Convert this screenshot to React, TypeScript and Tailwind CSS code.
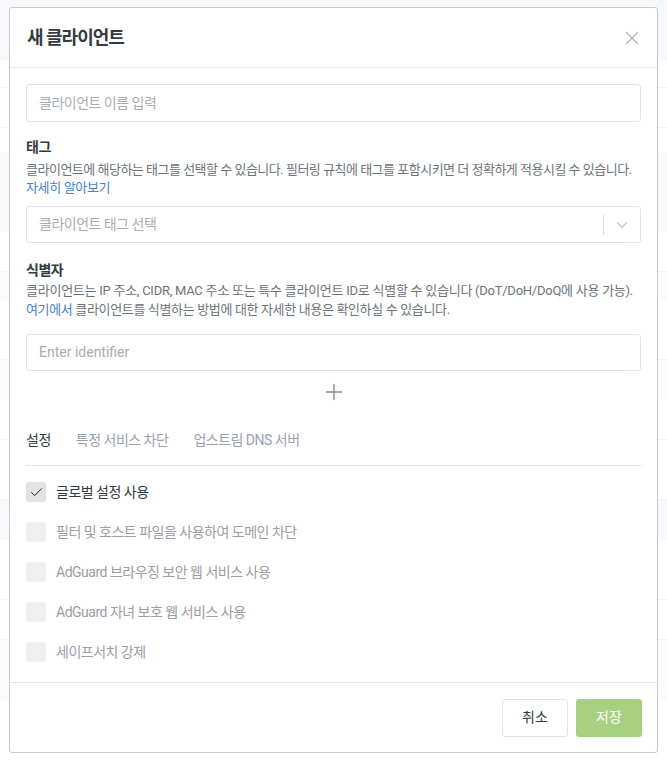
import { X, Plus, ChevronDown, Check } from "lucide-react";

const font = "font-['Roboto','Noto_Sans_CJK_KR',sans-serif]";

// Faint page rows behind the backdrop
const bgRows = [
  { h: "h-[60px]", cls: "bg-[#f3f6fa]" },
  { h: "h-[28px]", cls: "border-b border-[#eef0f3]" },
  { h: "h-[40px]", cls: "border-b border-[#eef0f3]" },
  { h: "h-[24px]", cls: "" },
  { h: "h-[80px]", cls: "bg-[#f7f7f8]" },
  { h: "h-[40px]", cls: "border-b border-[#eef0f3]" },
  { h: "h-[28px]", cls: "bg-[#f8f9fa]" },
  { h: "h-[60px]", cls: "border-b border-[#eef0f3]" },
  { h: "h-[40px]", cls: "bg-[#f8f9fb]" },
  { h: "h-[40px]", cls: "border-b border-[#eef0f3]" },
  { h: "h-[60px]", cls: "border-b border-[#eef0f3]" },
  { h: "h-[40px]", cls: "bg-[#f5f7fb]" },
  { h: "h-[60px]", cls: "border-b border-[#eef0f3]" },
  { h: "h-[40px]", cls: "border-b border-[#eef0f3]" },
  { h: "h-[60px]", cls: "bg-[#f8f9fa]" },
];

const settings = [
  { label: "글로벌 설정 사용", checked: true },
  { label: "필터 및 호스트 파일을 사용하여 도메인 차단", checked: false },
  { label: "AdGuard 브라우징 보안 웹 서비스 사용", checked: false },
  { label: "AdGuard 자녀 보호 웹 서비스 사용", checked: false },
  { label: "세이프서치 강제", checked: false },
];

const tabs = ["설정", "특정 서비스 차단", "업스트림 DNS 서버"];

const App = () => {
  return (
    <div className={`relative w-full h-[762px] overflow-hidden bg-white ${font}`}>
      {/* Page behind the modal */}
      <div className="flex flex-col opacity-70">
        {bgRows.map((row, i) => (
          <div key={i} className={`${row.h} ${row.cls}`} />
        ))}
      </div>

      {/* Modal */}
      <div className="absolute left-[9px] top-[7px] w-[649px] h-[746px] flex flex-col bg-white border border-[#c9c9c9] rounded-[3px]">
        {/* Header */}
        <div className="h-[60px] shrink-0 flex items-center justify-between pl-[17px] pr-[14px] border-b border-[#e6e8ec]">
          <h2 className="text-[18px] font-semibold tracking-[-1px] text-[#343a40]">새 클라이언트</h2>
          <button className="text-[#b0b4ba]">
            <X size={22} strokeWidth={1.3} />
          </button>
        </div>

        {/* Body */}
        <div className="flex-1 flex flex-col px-[16px] pt-[16px]">
          <div className="h-[38px] flex items-center px-[12px] border border-[#e0e5ec] rounded-[3px] text-[14px] tracking-[-0.5px] text-[#a8adb4]">
            클라이언트 이름 입력
          </div>

          <div className="mt-[15px] h-[21px] leading-[21px] text-[14px] font-semibold tracking-[-0.5px] text-[#343a40]">태그</div>
          <p className="mt-[3px] text-[13px] leading-[18px] tracking-[-0.5px] whitespace-nowrap text-[#6e737a]">
            클라이언트에 해당하는 태그를 선택할 수 있습니다. 필터링 규칙에 태그를 포함시키면 더 정확하게 적용시킬 수 있습니다.
          </p>
          <a className="text-[13px] leading-[18px] tracking-[-0.35px] text-[#467fcf] w-fit">자세히 알아보기</a>

          <div className="mt-[9px] h-[37px] flex items-center border border-[#e0e5ec] rounded-[3px]">
            <span className="flex-1 px-[12px] text-[14px] tracking-[-0.5px] text-[#a8adb4]">클라이언트 태그 선택</span>
            <span className="w-px h-[20px] bg-[#d8dce2]" />
            <span className="w-[36px] flex justify-center text-[#c3c7cc]">
              <ChevronDown size={18} strokeWidth={1.5} />
            </span>
          </div>

          <div className="mt-[17px] h-[21px] leading-[21px] text-[14px] font-semibold tracking-[-0.5px] text-[#343a40]">식별자</div>
          <p className="text-[13px] leading-[19px] tracking-[-0.25px] whitespace-nowrap text-[#6e737a]">
            클라이언트는 IP 주소, CIDR, MAC 주소 또는 특수 클라이언트 ID로 식별할 수 있습니다 (DoT/DoH/DoQ에 사용 가능).
          </p>
          <p className="text-[13px] leading-[19px] tracking-[-0.35px] text-[#6e737a]">
            <a className="text-[#467fcf]">여기에서</a> 클라이언트를 식별하는 방법에 대한 자세한 내용은 확인하실 수 있습니다.
          </p>

          <div className="mt-[15px] h-[37px] flex items-center px-[12px] border border-[#e0e5ec] rounded-[3px] text-[14px] text-[#a8adb4]">
            Enter identifier
          </div>

          <div className="mt-[8px] flex justify-center text-[#8a8f96]">
            <Plus size={26} strokeWidth={1.3} />
          </div>

          {/* Tabs */}
          <div className="mt-[25px] flex gap-[25px] text-[14px] tracking-[-0.5px] h-[20px] leading-[20px]">
            {tabs.map((tab, i) => (
              <span key={tab} className={i === 0 ? "text-[#343a40]" : "text-[#9aa0ac]"}>
                {tab}
              </span>
            ))}
          </div>
          <div className="mt-[15px] border-b border-[#e3e6ea]" />

          <div className="mt-[16px] flex flex-col gap-[20px]">
            {settings.map((item) => (
              <div key={item.label} className="flex items-center gap-[10px] h-[20px]">
                <span
                  className={`w-[20px] h-[20px] rounded-[3px] flex items-center justify-center ${
                    item.checked ? "bg-[#e3e3e3] text-[#222]" : "bg-[#efefef]"
                  }`}
                >
                  {item.checked && <Check size={15} strokeWidth={1.6} />}
                </span>
                <span
                  className={`text-[14px] tracking-[-0.5px] ${item.checked ? "text-[#343a40]" : "text-[#9a9ea4]"}`}
                >
                  {item.label}
                </span>
              </div>
            ))}
          </div>
        </div>

        {/* Footer */}
        <div className="h-[70px] shrink-0 flex items-center justify-end gap-[8px] pl-[16px] pr-[15px] border-t border-[#e3e6ea]">
          <button className="w-[66px] h-[38px] rounded-[3px] border border-[#dfe3ea] bg-white text-[14px] text-[#343a40]">
            취소
          </button>
          <button className="w-[66px] h-[38px] rounded-[3px] bg-[#a8d080] text-[14px] text-white">
            저장
          </button>
        </div>
      </div>
    </div>
  );
};

export default App;
